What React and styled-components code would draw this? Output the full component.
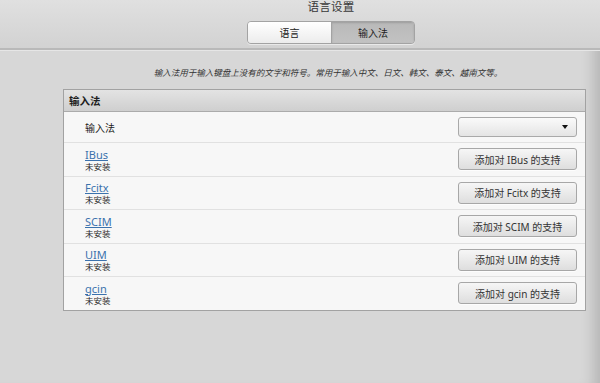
import React from "react";
import styled, { createGlobalStyle } from "styled-components";

const Global = createGlobalStyle`
  html, body { margin: 0; padding: 0; background: #d7d7d7; }
  body { font-family: "Noto Sans", "Noto Sans CJK SC", sans-serif; color: #2e2e2e; }
  * { box-sizing: border-box; }
`;

const Window = styled.div`
  width: 600px;
  height: 383px;
  background: #d7d7d7;
  overflow: hidden;
  box-shadow: inset -16px 0 14px -10px rgba(0, 0, 0, 0.16);
  display: flex;
  flex-direction: column;
`;

const Header = styled.header`
  height: 50px;
  padding-left: 62px;
  padding-top: 1px;
  background: linear-gradient(#e0e0e0, #d2d2d2);
  border-bottom: 2px solid #b9b9b9;
  box-shadow: 0 1px 0 #e6e6e6;
  display: flex;
  flex-direction: column;
  align-items: center;
`;

const Title = styled.div`
  font-size: 11.5px;
  line-height: 12px;
  color: #383838;
  letter-spacing: 0.3px;
`;

const Tabs = styled.div`
  margin-top: 8px;
  display: flex;
  height: 23px;
  border: 1px solid #a3a3a3;
  border-radius: 4px;
  overflow: hidden;
  box-shadow: 0 1px 0 rgba(255, 255, 255, 0.5);
`;

const Tab = styled.div`
  width: ${(p) => p.$w}px;
  display: flex;
  align-items: center;
  justify-content: center;
  font-size: 10px;
  color: #222;
  background: ${(p) =>
    p.$active
      ? "linear-gradient(#b9b9b9, #c2c2c2)"
      : "linear-gradient(#ffffff, #ececec)"};
  box-shadow: ${(p) => (p.$active ? "inset 0 1px 2px rgba(0,0,0,0.15)" : "none")};
  & + & {
    border-left: 1px solid #a3a3a3;
  }
`;

const Description = styled.p`
  margin: 17px 0 10px 0;
  padding-left: 56px;
  font-size: 8.5px;
  line-height: 12px;
  font-style: italic;
  text-align: center;
  color: #333;
`;

const Panel = styled.section`
  margin-left: 63px;
  width: 523px;
  border: 1px solid #a2a2a2;
  background: #f7f7f7;
`;

const PanelHeader = styled.div`
  height: 22px;
  padding-left: 5px;
  display: flex;
  align-items: center;
  font-size: 10.5px;
  font-weight: bold;
  color: #1e1e1e;
  background: linear-gradient(#e3e3e3, #cfcfcf);
  border-bottom: 1px solid #ababab;
`;

const Row = styled.div`
  height: ${(p) => p.$h}px;
  padding: 0 8px 0 21px;
  display: flex;
  align-items: center;
  justify-content: space-between;
  border-top: ${(p) => (p.$first ? "none" : "1px solid #e1e1e1")};
`;

const Label = styled.div`
  font-size: 10px;
  color: #222;
`;

const Info = styled.div`
  display: flex;
  flex-direction: column;
  padding-top: 2px;
`;

const Link = styled.a`
  font-size: 11px;
  line-height: 12px;
  color: #3b72ad;
  text-decoration: underline;
  cursor: pointer;
`;

const Status = styled.span`
  font-size: 8.5px;
  line-height: 11px;
  color: #2a2a2a;
`;

const Select = styled.div`
  width: 119px;
  height: 20px;
  border: 1px solid #a9a9a9;
  border-radius: 3px;
  background: linear-gradient(#fafafa, #e4e4e4);
  display: flex;
  align-items: center;
  justify-content: flex-end;
  padding-right: 8px;
`;

const Arrow = styled.span`
  width: 0;
  height: 0;
  border-left: 3.5px solid transparent;
  border-right: 3.5px solid transparent;
  border-top: 4px solid #111;
`;

const Button = styled.button`
  width: 119px;
  height: 22px;
  border: 1px solid #a7a7a7;
  border-radius: 3px;
  background: linear-gradient(#f6f6f6, #dedede);
  font-family: "Noto Sans", "Noto Sans CJK SC", sans-serif;
  font-size: 10px;
  color: #333;
  padding: 0;
  box-shadow: 0 1px 0 rgba(255, 255, 255, 0.7);
`;

const methods = ["IBus", "Fcitx", "SCIM", "UIM", "gcin"];

export default function App() {
  return (
    <>
      <Global />
      <Window>
        <Header>
          <Title>语言设置</Title>
          <Tabs>
            <Tab $w={83}>语言</Tab>
            <Tab $w={83} $active>
              输入法
            </Tab>
          </Tabs>
        </Header>
        <Description>
          输入法用于输入键盘上没有的文字和符号。常用于输入中文、日文、韩文、泰文、越南文等。
        </Description>
        <Panel>
          <PanelHeader>输入法</PanelHeader>
          <Row $h={30} $first>
            <Label>输入法</Label>
            <Select>
              <Arrow />
            </Select>
          </Row>
          {methods.map((m) => (
            <Row key={m} $h={33.5}>
              <Info>
                <Link>{m}</Link>
                <Status>未安装</Status>
              </Info>
              <Button>添加对 {m} 的支持</Button>
            </Row>
          ))}
        </Panel>
      </Window>
    </>
  );
}
